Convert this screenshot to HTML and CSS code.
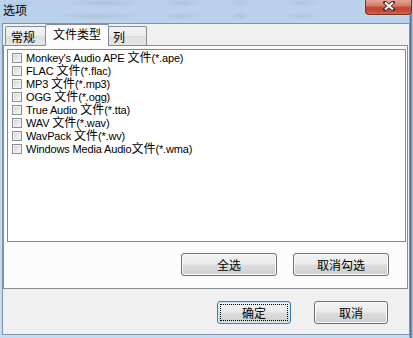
FILE: index.html
```html
<!DOCTYPE html>
<html>
<head>
<meta charset="utf-8">
<link rel="stylesheet" href="styles.css">
</head>
<body>
<div class="window">
  <div class="titlebar">
    <span class="title">选项</span>
    <div class="close">
      <svg width="12" height="10" viewBox="0 0 12 10">
        <path d="M2 1.5 L10 8.5 M10 1.5 L2 8.5" stroke="#3a2420" stroke-width="3.6" stroke-linecap="square"/>
        <path d="M2 1.5 L10 8.5 M10 1.5 L2 8.5" stroke="#ffffff" stroke-width="2"/>
      </svg>
    </div>
  </div>
  <div class="client">
    <div class="tabs">
      <div class="tab t1">常规</div>
      <div class="tab t2 active">文件类型</div>
      <div class="tab t3">列</div>
    </div>
    <div class="pane">
      <div class="list">
        <div class="item"><span class="cb"></span><span class="lbl">Monkey's Audio APE <span class="z">文件</span>(*.ape)</span></div>
        <div class="item"><span class="cb"></span><span class="lbl">FLAC <span class="z">文件</span>(*.flac)</span></div>
        <div class="item"><span class="cb"></span><span class="lbl">MP3 <span class="z">文件</span>(*.mp3)</span></div>
        <div class="item"><span class="cb"></span><span class="lbl">OGG <span class="z">文件</span>(*.ogg)</span></div>
        <div class="item"><span class="cb"></span><span class="lbl">True Audio <span class="z">文件</span>(*.tta)</span></div>
        <div class="item"><span class="cb"></span><span class="lbl">WAV <span class="z">文件</span>(*.wav)</span></div>
        <div class="item"><span class="cb"></span><span class="lbl">WavPack <span class="z">文件</span>(*.wv)</span></div>
        <div class="item"><span class="cb"></span><span class="lbl">Windows Media Audio<span class="z">文件</span>(*.wma)</span></div>
      </div>
      <div class="pane-buttons">
        <div class="btn wide">全选</div>
        <div class="btn wide">取消勾选</div>
      </div>
    </div>
    <div class="dlg-buttons">
      <div class="btn dlg focus">确定</div>
      <div class="btn dlg">取消</div>
    </div>
  </div>
</div>
</body>
</html>
```

FILE: styles.css
```css
html, body {
  margin: 0;
  padding: 0;
}

body {
  width: 413px;
  height: 338px;
  overflow: hidden;
  background: linear-gradient(180deg, #b9d1ea 0%, #c3d9f0 40%, #c6dcf2 100%);
  font-family: "Liberation Sans", "Noto Sans CJK SC", sans-serif;
  color: #000;
}

.window {
  display: flex;
  flex-direction: column;
  height: 338px;
  padding: 0 3px 3px 2px;
  box-sizing: border-box;
  background: linear-gradient(90deg, rgba(255,255,255,0) 409px, #6c88aa 410px, #3f5f86 411px, #a9c3df 412px);
}

.titlebar {
  height: 23px;
  display: flex;
  justify-content: space-between;
  align-items: flex-start;
  background:
    radial-gradient(ellipse 40px 4px at 100px 3px, rgba(120, 140, 165, 0.22), rgba(120, 140, 165, 0)),
    radial-gradient(ellipse 45px 4px at 95px 16px, rgba(120, 140, 165, 0.2), rgba(120, 140, 165, 0)),
    radial-gradient(ellipse 18px 4px at 180px 3px, rgba(120, 140, 165, 0.2), rgba(120, 140, 165, 0)),
    radial-gradient(ellipse 18px 4px at 180px 16px, rgba(120, 140, 165, 0.2), rgba(120, 140, 165, 0)),
    radial-gradient(ellipse 12px 4px at 238px 3px, rgba(120, 140, 165, 0.18), rgba(120, 140, 165, 0)),
    radial-gradient(ellipse 12px 4px at 238px 16px, rgba(120, 140, 165, 0.18), rgba(120, 140, 165, 0)),
    radial-gradient(ellipse 18px 4px at 300px 3px, rgba(120, 140, 165, 0.18), rgba(120, 140, 165, 0)),
    radial-gradient(ellipse 18px 4px at 300px 16px, rgba(120, 140, 165, 0.18), rgba(120, 140, 165, 0)),
    radial-gradient(ellipse 14px 3px at 22px 3px, rgba(120, 140, 165, 0.15), rgba(120, 140, 165, 0));
}

.title {
  font-family: "Noto Sans CJK SC", sans-serif;
  font-size: 12px;
  line-height: 12px;
  margin: 4px 0 0 1px;
  color: #000;
}

.close {
  width: 47px;
  height: 15px;
  box-sizing: border-box;
  margin-right: -2px;
  margin-left: auto;
  border: 1px solid #7a2f27;
  border-top: none;
  border-radius: 0 0 4px 4px;
  background: linear-gradient(180deg, #e4a596 0%, #d67b69 40%, #c44531 55%, #c34b36 80%, #d06a52 100%);
  box-shadow: 0 0 2px rgba(255, 255, 255, 0.7);
  display: flex;
  justify-content: center;
  align-items: flex-start;
  padding-top: 1px;
}

.client {
  flex: 1;
  background: #f0f0f0;
  border: 1px solid #7f93ac;
  display: flex;
  flex-direction: column;
}

.tabs {
  display: flex;
  align-items: flex-end;
  height: 21px;
  padding-left: 2px;
  position: relative;
  z-index: 1;
}

.tab {
  box-sizing: border-box;
  height: 19px;
  border: 1px solid #898c95;
  border-bottom: none;
  background: linear-gradient(180deg, #f3f3f3 0%, #ebebeb 50%, #dedede 51%, #e6e6e6 100%);
  font-family: "Noto Sans CJK SC", sans-serif;
  font-size: 12px;
  line-height: 12px;
  padding: 4px 0 0 5px;
  border-radius: 2px 2px 0 0;
}

.t1 { width: 41px; }
.t2 { width: 64px; margin-left: -1px; }
.t3 { width: 39px; margin-left: -1px; padding-left: 4px; }

.tab.active {
  height: 22px;
  margin-bottom: -1px;
  background: #fcfcfc;
  padding: 3px 0 0 7px;
  position: relative;
  z-index: 2;
}

.pane {
  height: 244px;
  box-sizing: border-box;
  margin-right: 1px;
  border: 1px solid #898c95;
  background: #fcfcfc;
  display: flex;
  flex-direction: column;
}

.list {
  height: 193px;
  box-sizing: border-box;
  margin: 3px 1px 0 3px;
  border: 1px solid #828790;
  background: #ffffff;
  padding: 1px 0 0 4px;
}

.item {
  display: flex;
  align-items: center;
  height: 13px;
}

.cb {
  width: 10px;
  height: 10px;
  box-sizing: border-box;
  border: 1px solid #8e8f8f;
  background: linear-gradient(135deg, #cfd0d2 0%, #eeeeee 70%, #f8f8f8 100%);
  box-shadow: inset 0 0 0 1px #f2f2f2;
  margin-right: 4px;
  flex: none;
}

.lbl {
  display: block;
  height: 13px;
  font-size: 11px;
  line-height: 13px;
  letter-spacing: -0.15px;
  white-space: nowrap;
}

.z {
  font-family: "Noto Sans CJK SC", sans-serif;
  font-size: 12px;
  letter-spacing: 0;
  line-height: 11px;
}

.pane-buttons {
  display: flex;
  justify-content: flex-end;
  gap: 16px;
  margin: 11px 18px 0 0;
}

.btn {
  box-sizing: border-box;
  height: 23px;
  border: 1px solid #707070;
  border-radius: 3px;
  background: linear-gradient(180deg, #f2f2f2 0%, #ebebeb 48%, #dddddd 52%, #cfcfcf 100%);
  box-shadow: inset 0 0 0 1px #fbfbfb;
  font-family: "Noto Sans CJK SC", sans-serif;
  font-size: 12px;
  line-height: 21px;
  text-align: center;
  color: #000;
}

.wide { width: 96px; }

.dlg-buttons {
  display: flex;
  justify-content: flex-end;
  gap: 23px;
  margin: 12px 21px 0 0;
}

.dlg { width: 74px; }

.focus {
  border-color: #3c7fb1;
  box-shadow: inset 0 0 0 1px #cdeaf9;
  outline: 1px dotted #000;
  outline-offset: -4px;
}
```
